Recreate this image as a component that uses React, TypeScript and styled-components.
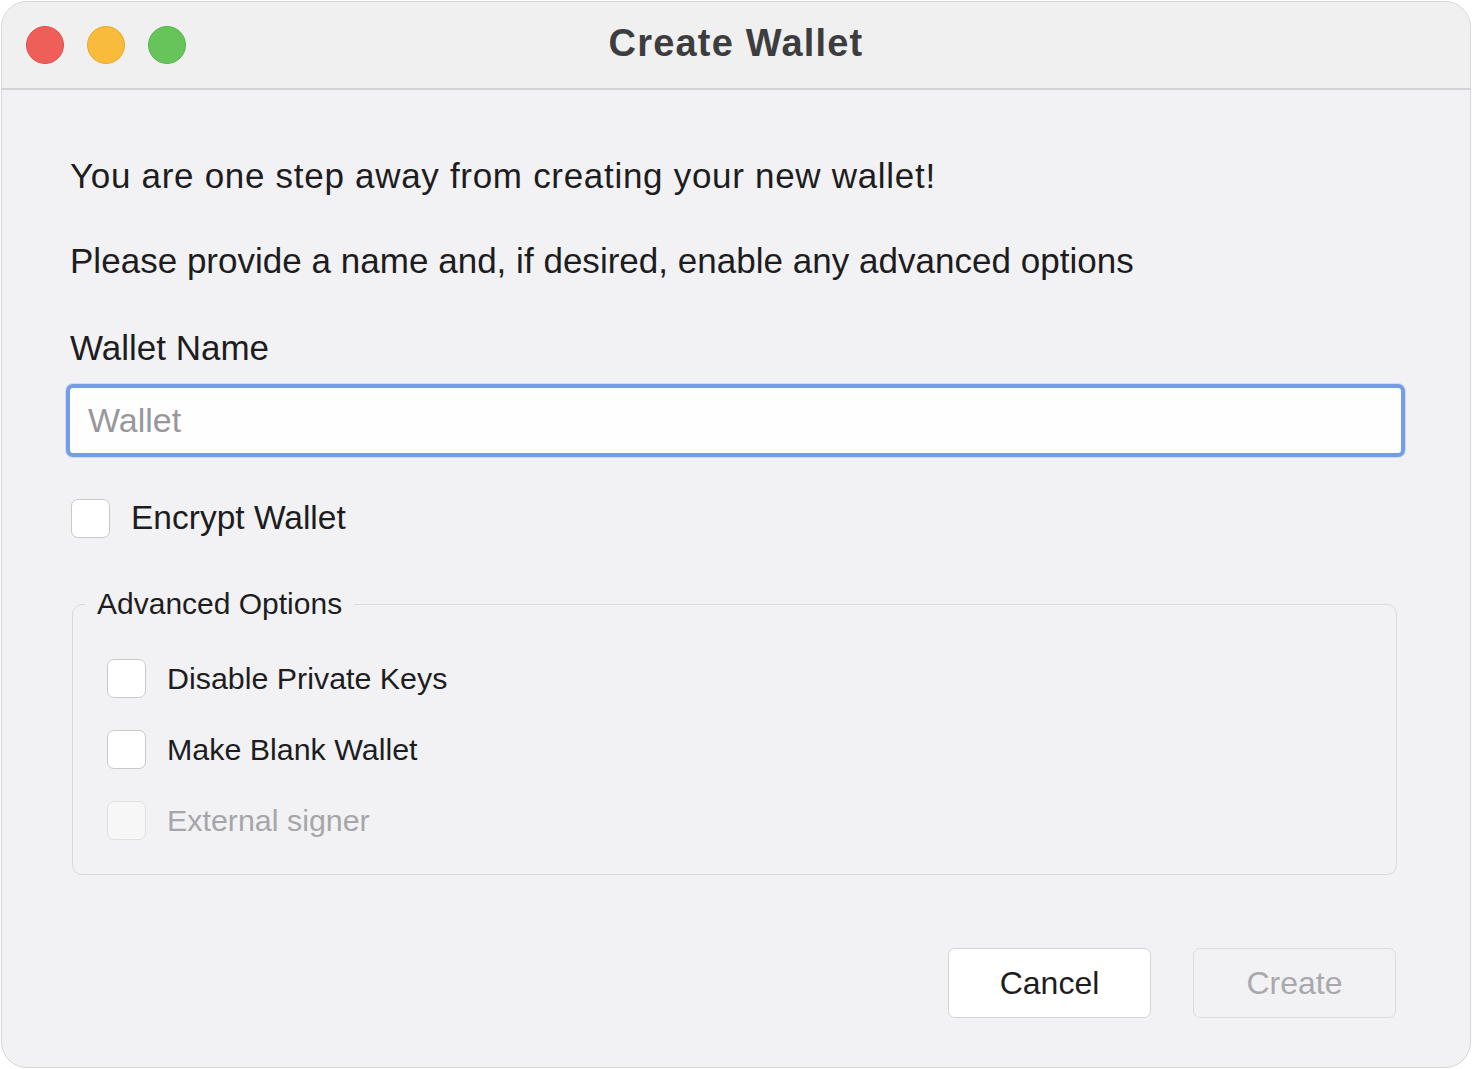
import React from "react";
import styled, { createGlobalStyle } from "styled-components";

const Global = createGlobalStyle`
  html, body { margin: 0; padding: 0; background: #ffffff; }
  body { font-family: "Liberation Sans", Arial, sans-serif; }
  * { box-sizing: border-box; }
`;

const Page = styled.div`
  padding: 1px 1px 0 1px;
  width: 1472px;
  height: 1069px;
`;

const Window = styled.div`
  width: 1470px;
  height: 1067px;
  border: 1.5px solid #d6d6d8;
  border-radius: 26px;
  overflow: hidden;
  background: #f2f2f4;
  display: flex;
  flex-direction: column;
`;

const TitleBar = styled.div`
  height: 88px;
  flex: none;
  background: #f0f0f0;
  border-bottom: 2px solid #d2d2d4;
  display: grid;
  grid-template-columns: 1fr auto 1fr;
  align-items: center;
`;

const Lights = styled.div`
  display: flex;
  gap: 23px;
  align-items: center;
  margin: 0 0 1px 24px;
`;

const Light = styled.span<{ $c: string; $b: string }>`
  width: 38px;
  height: 38px;
  border-radius: 50%;
  background: ${(p) => p.$c};
  border: 1px solid ${(p) => p.$b};
`;

const Title = styled.div`
  font-size: 38px;
  font-weight: 700;
  color: #3d3d3f;
  letter-spacing: 1.2px;
  margin-top: -3px;
`;

const Body = styled.div`
  flex: 1;
  display: flex;
  flex-direction: column;
  padding: 0 65px 0 64px;
`;

const Para = styled.p<{ $top: number; $ls: number }>`
  margin: ${(p) => p.$top}px 0 0 4px;
  font-size: 35px;
  line-height: 40px;
  letter-spacing: ${(p) => p.$ls}px;
  color: #1d1d1f;
`;

const FieldLabel = styled.div`
  margin: 47px 0 0 4px;
  font-size: 35px;
  line-height: 40px;
  color: #1d1d1f;
`;

const Input = styled.input`
  margin-top: 16px;
  height: 73px;
  width: 100%;
  border: 4px solid #739de6;
  border-radius: 7px;
  background: #fefefe;
  padding: 0 18px;
  font-family: "Liberation Sans", Arial, sans-serif;
  font-size: 34px;
  color: #1d1d1f;
  outline: none;
  box-shadow: 0 0 0 1px rgba(115, 157, 230, 0.25);
  &::placeholder { color: #98989c; }
`;

const CheckRow = styled.label<{ $disabled?: boolean; $size: number }>`
  display: flex;
  align-items: center;
  gap: 21px;
  height: 40px;
  font-size: ${(p) => p.$size}px;
  color: ${(p) => (p.$disabled ? "#a6a6aa" : "#1d1d1f")};
`;

const Box = styled.span<{ $disabled?: boolean }>`
  width: 39px;
  height: 39px;
  flex: none;
  border-radius: 7px;
  background: ${(p) => (p.$disabled ? "#f7f7f8" : "#ffffff")};
  border: 1.5px solid ${(p) => (p.$disabled ? "#e0e0e2" : "#c9c9cc")};
`;

const EncryptRow = styled.div`
  margin: 41px 0 0 5px;
`;

const Group = styled.fieldset`
  margin: 48px 8px 0 6px;
  padding: 0 0 34px 34px;
  border: 1.5px solid #dadadc;
  border-radius: 10px;
  display: flex;
  flex-direction: column;
  gap: 31px;
`;

const Legend = styled.legend`
  margin-left: -22px;
  padding: 0 12px;
  font-size: 30px;
  line-height: 36px;
  color: #1d1d1f;
  margin-bottom: 36px;
`;

const Footer = styled.div`
  margin-top: auto;
  margin-bottom: 49px;
  margin-right: 9px;
  display: flex;
  justify-content: flex-end;
  gap: 42px;
`;

const Button = styled.button<{ $disabled?: boolean }>`
  width: 203px;
  height: 70px;
  border-radius: 7px;
  border: 1.5px solid ${(p) => (p.$disabled ? "#dcdcde" : "#d4d4d6")};
  background: ${(p) => (p.$disabled ? "#f2f2f4" : "#ffffff")};
  color: ${(p) => (p.$disabled ? "#a9a9ad" : "#1d1d1f")};
  font-family: "Liberation Sans", Arial, sans-serif;
  font-size: 32px;
  padding: 0;
`;

export default function App() {
  return (
    <Page>
      <Global />
      <Window>
        <TitleBar>
          <Lights>
            <Light $c="#ef5f5a" $b="#e04d48" />
            <Light $c="#f8bb3c" $b="#e8a82b" />
            <Light $c="#66c45a" $b="#57b34b" />
          </Lights>
          <Title>Create Wallet</Title>
          <div />
        </TitleBar>
        <Body>
          <Para $top={66} $ls={0.7}>You are one step away from creating your new wallet!</Para>
          <Para $top={45} $ls={0.02}>Please provide a name and, if desired, enable any advanced options</Para>
          <FieldLabel>Wallet Name</FieldLabel>
          <Input placeholder="Wallet" />
          <EncryptRow>
            <CheckRow $size={33.5}>
              <Box />
              Encrypt Wallet
            </CheckRow>
          </EncryptRow>
          <Group>
            <Legend>Advanced Options</Legend>
            <CheckRow $size={30.4}>
              <Box />
              Disable Private Keys
            </CheckRow>
            <CheckRow $size={30.4}>
              <Box />
              Make Blank Wallet
            </CheckRow>
            <CheckRow $size={30.4} $disabled>
              <Box $disabled />
              External signer
            </CheckRow>
          </Group>
          <Footer>
            <Button>Cancel</Button>
            <Button $disabled disabled>Create</Button>
          </Footer>
        </Body>
      </Window>
    </Page>
  );
}
